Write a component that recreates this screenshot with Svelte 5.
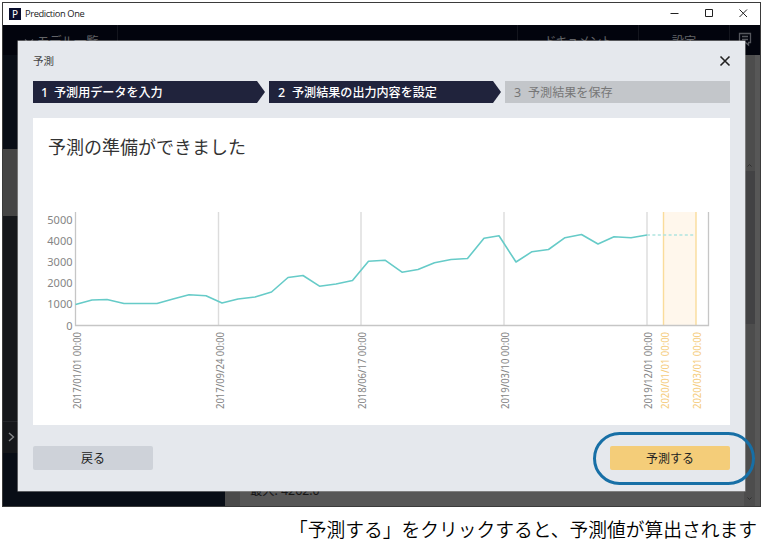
<script>
  const steps = [
    { n: 1, label: '予測用データを入力', width: 232, done: true },
    { n: 2, label: '予測結果の出力内容を設定', width: 232, done: true },
    { n: 3, label: '予測結果を保存', width: 225, done: false }
  ];
  const yTicks = [
    { v: 5000, y: 105.5 },
    { v: 4000, y: 126.5 },
    { v: 3000, y: 147.5 },
    { v: 2000, y: 169 },
    { v: 1000, y: 190 },
    { v: 0, y: 212 }
  ];
  const xTicks = [
    { x: 42.5, label: '2017/01/01 00:00' },
    { x: 185.5, label: '2017/09/24 00:00' },
    { x: 328, label: '2018/06/17 00:00' },
    { x: 471, label: '2019/03/10 00:00' },
    { x: 614, label: '2019/12/01 00:00' },
    { x: 630.5, label: '2020/01/01 00:00', future: true },
    { x: 663, label: '2020/03/01 00:00', future: true }
  ];
  const series = [
    [42.5, 186.5], [59, 182], [74, 181.5], [91, 185.5], [124, 185.5], [140, 181],
    [156, 176.8], [173, 177.8], [189, 185], [205, 181], [222, 179], [238.5, 174],
    [255, 159.5], [270, 157.5], [286.5, 168.2], [303, 166], [319.5, 162.5],
    [335.5, 143.2], [352, 142.2], [369, 154.2], [385, 151.5], [401.5, 144.7],
    [418, 141.5], [434.5, 140.5], [451, 120.2], [466, 117.8], [483, 144],
    [499, 133.7], [515.5, 131.5], [532, 119.7], [548.5, 116.5], [565, 126],
    [581, 118.7], [598, 119.8], [614, 117]
  ];
  const points = series.map((p) => p.join(',')).join(' ');
</script>

<div class="page">
  <div class="window">
    <header class="titlebar">
      <span class="logo">P</span>
      <span class="app-name">Prediction One</span>
      <svg class="controls" width="90" height="22" viewBox="0 0 90 22" fill="none" stroke="#222">
        <path d="M7.5 10.5h8M42.500 6.500h7v7h-7zM76.500 6.500l7.500 7.500M84 6.500l-7.500 7.500" />
      </svg>
    </header>

    <div class="backdrop">
      <nav class="nav">
        <div class="models"><svg width="10" height="6" viewBox="0 0 10 6"><path d="M1 .5L5 4.500 9 .5" /></svg>モデル一覧</div>
        <div class="spacer"></div>
        <div class="docs">ドキュメント</div>
        <div class="settings">設定</div>
        <div class="chat">
          <svg width="14" height="15" viewBox="0 0 14 15"><path d="M1.500 1.500h11v9h-2v2.500l-3-2.500h-6zM4 4.500h6M4 7.500h6" /></svg>
        </div>
      </nav>
      <div class="under">
        <aside class="side">
          <div class="dark top"></div>
          <div class="selected"></div>
          <div class="items"></div>
          <div class="toggle"><svg width="7" height="10" viewBox="0 0 7 10"><path d="M1 1l4.500 4L1 9" /></svg></div>
          <div class="dark rest"></div>
        </aside>
        <div class="gutter"></div>
        <main class="stats"><span>最大: 4262.0</span></main>
        <div class="scroll">
          <svg width="11" height="12" viewBox="0 0 11 12"><path d="M3.500 7.500L5.500 5.500l2 2" /></svg>
          <div class="thumb"></div>
          <svg width="11" height="14" viewBox="0 0 11 14"><path d="M3.500 5.500l2 2 2-2" /></svg>
        </div>
      </div>
    </div>
  </div>

  <section class="dialog">
    <div class="head">
      <span>予測</span>
      <svg width="12" height="12" viewBox="0 0 12 12"><path d="M1.500 1.500l9 9M10.500 1.500l-9 9" stroke="#222" stroke-width="1.600" /></svg>
    </div>
    <div class="steps">
      {#each steps as s}
        <div class="step" class:done={s.done} style="width:{s.width}px"><span class="num">{s.n}</span>{s.label}</div>
      {/each}
    </div>
    <div class="card">
      <h1>予測の準備ができました</h1>
      <svg class="chart" width="697" height="249" viewBox="0 58 697 249">
        <rect x="630" y="94" width="33" height="113" fill="#fff7ec" />
        {#each xTicks as t, i}
          {#if i > 0}
            <line x1={t.x} x2={t.x} y1="94" y2="207" stroke={t.future ? '#fadc9b' : '#dcdcdc'} stroke-width="1.400" />
          {/if}
        {/each}
        <path d="M42.500 94V207.500H675.500V94" fill="none" stroke="#c6c6c6" stroke-width="1.300" />
        {#each yTicks as t}
          <text x="39.500" y={t.y} text-anchor="end" class="ytick">{t.v}</text>
        {/each}
        {#each xTicks as t}
          <text transform="translate({t.x + 5} 291) rotate(-90)" textLength="77" lengthAdjust="spacingAndGlyphs" class="xtick" class:future={t.future}>{t.label}</text>
        {/each}
        <polyline {points} fill="none" stroke="#66cbc8" stroke-width="1.600" stroke-linejoin="round" />
        <path d="M614 117H662" stroke="#b0e5df" stroke-width="1.600" stroke-dasharray="3 2.400" />
      </svg>
    </div>
    <div class="actions">
      <button>戻る</button>
      <button class="primary">予測する</button>
    </div>
  </section>

  <div class="highlight"></div>
  <p class="caption">「予測する」をクリックすると、予測値が算出されます</p>
</div>

<style>
  :global(body) { margin: 0; background: #fff; }
  * { box-sizing: border-box; }
  .page {
    position: relative; width: 763px; height: 542px; overflow: hidden; padding: 2px 0 0 2px;
    background: #fff; font-family: "Noto Sans", "Noto Sans CJK JP", sans-serif;
  }
  .window {
    width: 759px; height: 505px; border: 1px solid #3b3b3b;
    display: flex; flex-direction: column; background: #050810;
  }
  .titlebar { height: 22px; background: #fff; display: flex; align-items: center; padding-left: 6px; flex: none; }
  .logo { width: 12px; height: 12px; background: #080c2b; color: #fff; font-size: 10px; line-height: 12px; text-align: center; }
  .app-name { margin-left: 4px; font-family: "Open Sans", sans-serif; font-size: 9.300px; letter-spacing: -.38px; color: #222; white-space: nowrap; line-height: 20px; }
  .controls { margin-left: auto; margin-right: 7px; }
  .backdrop { flex: 1; display: flex; flex-direction: column; min-height: 0; }
  .nav { height: 30px; background: #02040d; display: flex; flex: none; color: #626468; font-size: 12.300px; line-height: 33px; }
  .nav > div { border-right: 1px solid #14161e; }
  .nav svg path { fill: none; stroke: #55575d; stroke-width: 1.300; }
  .models { width: 115px; padding-left: 21px; white-space: nowrap; }
  .models svg { margin-right: 3px; vertical-align: 1px; }
  .nav .spacer { flex: 1; }
  .docs { width: 121px; text-align: center; letter-spacing: -1px; }
  .settings { width: 91px; text-align: center; }
  .nav .chat { width: 30px; border: 0; padding: 7px 0 0 8px; line-height: 0; }
  .under { flex: 1; display: flex; min-height: 0; }
  .side { width: 222px; display: flex; flex-direction: column; flex: none; }
  .dark { background: #080d16; }
  .dark.top { height: 94px; }
  .selected { height: 67px; background: #454545; }
  .items { height: 206px; background: #15171b; border-bottom: 1px solid #24262a; }
  .toggle { height: 31px; background: #15171b; padding: 10px 0 0 5px; line-height: 0; }
  .toggle path { fill: none; stroke: #85878a; stroke-width: 1.400; }
  .rest { flex: 1; }
  .gutter { width: 15px; background: #4a4a4a; flex: none; }
  .stats { flex: 1; background: #575757; display: flex; align-items: flex-end; padding: 0 0 6px 10px; color: #151515; font-size: 12.300px; line-height: 18px; }
  .scroll { width: 16px; background: #4d4d4d; border-right: 5px solid #575757; padding-top: 104px; display: flex; flex-direction: column; line-height: 0; }
  .scroll path { fill: none; stroke: #303030; }
  .thumb { flex: none; height: 153px; margin-bottom: auto; background: #424244; }

  .dialog {
    position: absolute; left: 18px; top: 41px; width: 727px; height: 450px; padding: 0 15px;
    background: #e5e8ed; box-shadow: 0 0 0 .5px #aaa; display: flex; flex-direction: column;
  }
  .head { height: 40px; display: flex; justify-content: space-between; align-items: center; color: #444; font-size: 10.500px; line-height: 14px; flex: none; }
  .head svg { margin-right: -1px; }
  .steps { display: flex; gap: 4px; height: 22px; flex: none; }
  .step { background: #c3c6ca; color: #777; font-size: 12.080px; line-height: 24px; padding-left: 9px; white-space: nowrap; }
  .step .num { display: inline-block; width: 14px; font-size: 12.500px; }
  .step:first-child { padding-left: 8px; }
  .step:first-child .num { width: 13px; }
  .done { background: #20233c; color: #fff; font-weight: 500; clip-path: polygon(0 0, calc(100% - 8px) 0, 100% 50%, calc(100% - 8px) 100%, 0 100%); }
  .card { margin-top: 15px; height: 307px; background: #fff; flex: none; }
  h1 { margin: 0; height: 58px; padding-left: 15px; line-height: 58px; font-size: 18px; font-weight: 400; color: #333; }
  .chart { display: block; }
  .ytick { font-size: 11px; fill: #858585; }
  .xtick { font-size: 10.300px; fill: #858585; }
  .future { fill: #f5cc7c; }
  .actions { display: flex; justify-content: space-between; margin-top: 21px; }
  button { width: 120px; height: 24px; border: 0; border-radius: 2px; padding: 1px 0 0; background: #ced2d9; color: #222; font: 12px/23px "Noto Sans", "Noto Sans CJK JP", sans-serif; }
  .primary { background: #f4cd79; }
  .highlight { position: absolute; left: 593px; top: 432px; width: 162px; height: 53px; border: 3px solid #176fa6; border-radius: 27px; }
  .caption { margin: 8px 6px 0 0; text-align: right; font-size: 18.750px; line-height: 28px; color: #000; white-space: nowrap; font-family: "Noto Sans CJK JP", sans-serif; font-weight: 350; }
</style>
